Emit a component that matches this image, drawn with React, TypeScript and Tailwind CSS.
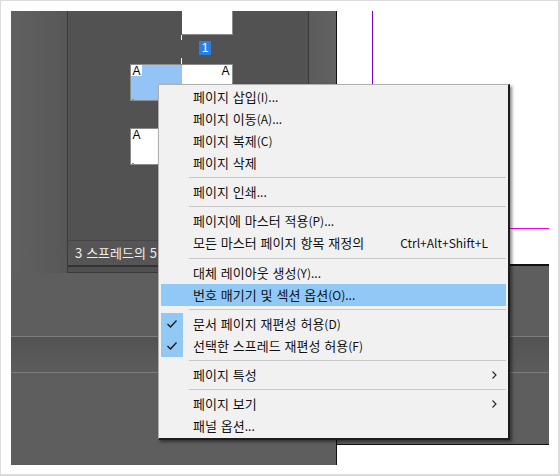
const font = { fontFamily: '"Noto Sans CJK KR", "Noto Sans", sans-serif' };

function Sep({ h = 7 }: { h?: number }) {
  return (
    <div className={h === 8 ? "h-[8px] pt-[4px] pl-[28px]" : "h-[7px] pt-[3px] pl-[28px]"}>
      <div className="h-px bg-[#c8c8c8]" />
    </div>
  );
}

function Label({ text }: { text: string }) {
  const m = text.match(/^(.*?)(\(.*|\.\.\.)?$/);
  return (
    <span className="ml-[10px] whitespace-nowrap pb-[2px] text-[13px] leading-none [word-spacing:1px]">
      {m ? m[1] : text}
      {m && m[2] ? <span className="text-[12px]">{m[2]}</span> : null}
    </span>
  );
}

function Row({
  label,
  shortcut,
  arrow,
  active,
  checked,
}: {
  label: string;
  shortcut?: string;
  arrow?: boolean;
  active?: boolean;
  checked?: boolean;
}) {
  return (
    <div className={`flex h-[22px] items-center text-[12px] text-[#111] ${active ? "bg-[#90c8f6]" : ""}`}>
      <div className={`flex h-[22px] w-[22px] shrink-0 items-center justify-center ${checked ? "bg-[#90c8f6]" : ""}`}>
        {checked && (
          <svg width="12" height="10" viewBox="0 0 12 10" fill="none" stroke="#1a1a1a" strokeWidth="1.4">
            <path d="M1.5 5 L4.5 8 L10.5 1.5" />
          </svg>
        )}
      </div>
      <Label text={label} />
      {shortcut && <span className="ml-auto mr-[18px] whitespace-nowrap leading-none">{shortcut}</span>}
      {arrow && (
        <svg className="ml-auto mr-[9px]" width="5" height="8" viewBox="0 0 5 8" fill="none" stroke="#222" strokeWidth="1.1">
          <path d="M0.5 0.5 L4 4 L0.5 7.5" />
        </svg>
      )}
    </div>
  );
}

function Tag({ white }: { white?: boolean }) {
  return (
    <span
      className={`flex h-[11px] w-[11px] items-center justify-center text-[12px] leading-none text-black ${white ? "bg-white" : ""}`}
      style={{ fontFamily: '"Liberation Sans", sans-serif' }}
    >
      A
    </span>
  );
}

function Spread({ selected, rightTag }: { selected?: boolean; rightTag?: boolean }) {
  return (
    <div className="ml-[62px] flex h-[37px] w-[103px] border border-[#8c8c8c]">
      <div className={`relative flex w-[51px] items-start ${selected ? "bg-[#94c4f5]" : "bg-white"}`}>
        <Tag white />
        <span className="absolute bottom-0 left-[1px] h-px w-[2px] bg-[#8c8c8c]" />
      </div>
      <div className="flex flex-1 justify-end bg-white pr-[1px]">{rightTag && <Tag />}</div>
    </div>
  );
}

export default function App() {
  return (
    <div
      className="relative h-[476px] w-[560px] overflow-hidden border-t border-r-2 border-b-2 border-l border-[#dcdcdc] bg-white p-[10px]"
      style={font}
    >
      <div className="flex h-[454px]">
        {/* left dark column */}
        <div className="flex w-[326px] shrink-0 flex-col border-r border-[#111] bg-[#5e5e5e]">
          <div className="flex h-[262px] shrink-0">
            <div className="w-[56px] shrink-0 bg-gradient-to-r from-[#616161] to-[#575757]" />
            <div className="flex w-[242px] shrink-0 flex-col border-x border-b border-[#3a3a3a] bg-[#525252]">
              <div className="flex h-[229px] shrink-0 flex-col">
                <div className="ml-[114px] h-[24px] w-[51px] border-r border-b border-[#8c8c8c] bg-white" />
                <div className="flex h-[29px] shrink-0">
                  <div className="ml-[113px] flex w-px flex-col justify-between">
                    <div className="h-[5px] bg-white" />
                    <div className="h-[6px] bg-white" />
                  </div>
                  <div
                    className="ml-[17px] mt-[6px] flex h-[14px] w-[12px] items-center justify-center bg-[#2b7fdf] text-[12px] leading-none text-white"
                    style={{ fontFamily: '"Liberation Sans", sans-serif' }}
                  >
                    1
                  </div>
                </div>
                <Spread selected rightTag />
                <div className="h-[27px] shrink-0" />
                <Spread />
              </div>
              <div className="flex h-[25px] shrink-0 items-center border-t border-[#464646] bg-[#555555] pl-[7px] text-[13px] text-[#eeeeee]">
                <span className="whitespace-nowrap pb-[2px] leading-none [word-spacing:1px]">3 스프레드의 5</span>
              </div>
              <div className="h-[7px] shrink-0 border-t-2 border-[#333333] bg-[#505050]" />
            </div>
            <div className="flex-1 bg-gradient-to-r from-[#5c5c5c] to-[#626262]" />
          </div>
          <div className="h-[63px] shrink-0 bg-[#5e5e5e]" />
          <div className="h-[37px] shrink-0 border-y border-[#7c7c7c] bg-gradient-to-b from-[#535353] to-[#5c5c5c]" />
          <div className="flex-1 bg-[#5e5e5e]" />
        </div>

        {/* right column */}
        <div className="flex w-[212px] shrink-0 flex-col">
          <div className="ml-[35px] h-[217px] w-px shrink-0 bg-[#7a00d0]" />
          <div className="h-px w-full shrink-0 bg-[#f000e8]" />
          <div className="h-[35px] shrink-0" />
          <div className="flex h-[181px] shrink-0 flex-col border-t-2 border-b border-t-[#111] border-b-[#111] bg-[#5e5e5e]">
            <div className="h-[70px] shrink-0" />
            <div className="h-[37px] shrink-0 border-y border-[#7c7c7c] bg-gradient-to-b from-[#535353] to-[#5c5c5c]" />
          </div>
        </div>
      </div>

      {/* context menu */}
      <div className="absolute left-[157px] top-[83px] h-[356px] w-[352px] border-t border-l border-[#b0b0b0] border-r-2 border-b-2 border-r-[#1c1c1c] border-b-[#1c1c1c] bg-[#f1f1f1] px-[2px] pt-[1px] shadow-[2px_2px_3px_rgba(0,0,0,0.45)]">
        <Row label="페이지 삽입(I)..." />
        <Row label="페이지 이동(A)..." />
        <Row label="페이지 복제(C)" />
        <Row label="페이지 삭제" />
        <Sep />
        <Row label="페이지 인쇄..." />
        <Sep />
        <Row label="페이지에 마스터 적용(P)..." />
        <Row label="모든 마스터 페이지 항목 재정의" shortcut="Ctrl+Alt+Shift+L" />
        <Sep h={8} />
        <Row label="대체 레이아웃 생성(Y)..." />
        <Row label="번호 매기기 및 섹션 옵션(O)..." active />
        <Sep />
        <Row label="문서 페이지 재편성 허용(D)" checked />
        <Row label="선택한 스프레드 재편성 허용(F)" checked />
        <Sep />
        <Row label="페이지 특성" arrow />
        <Sep />
        <Row label="페이지 보기" arrow />
        <Row label="패널 옵션..." />
      </div>
    </div>
  );
}
